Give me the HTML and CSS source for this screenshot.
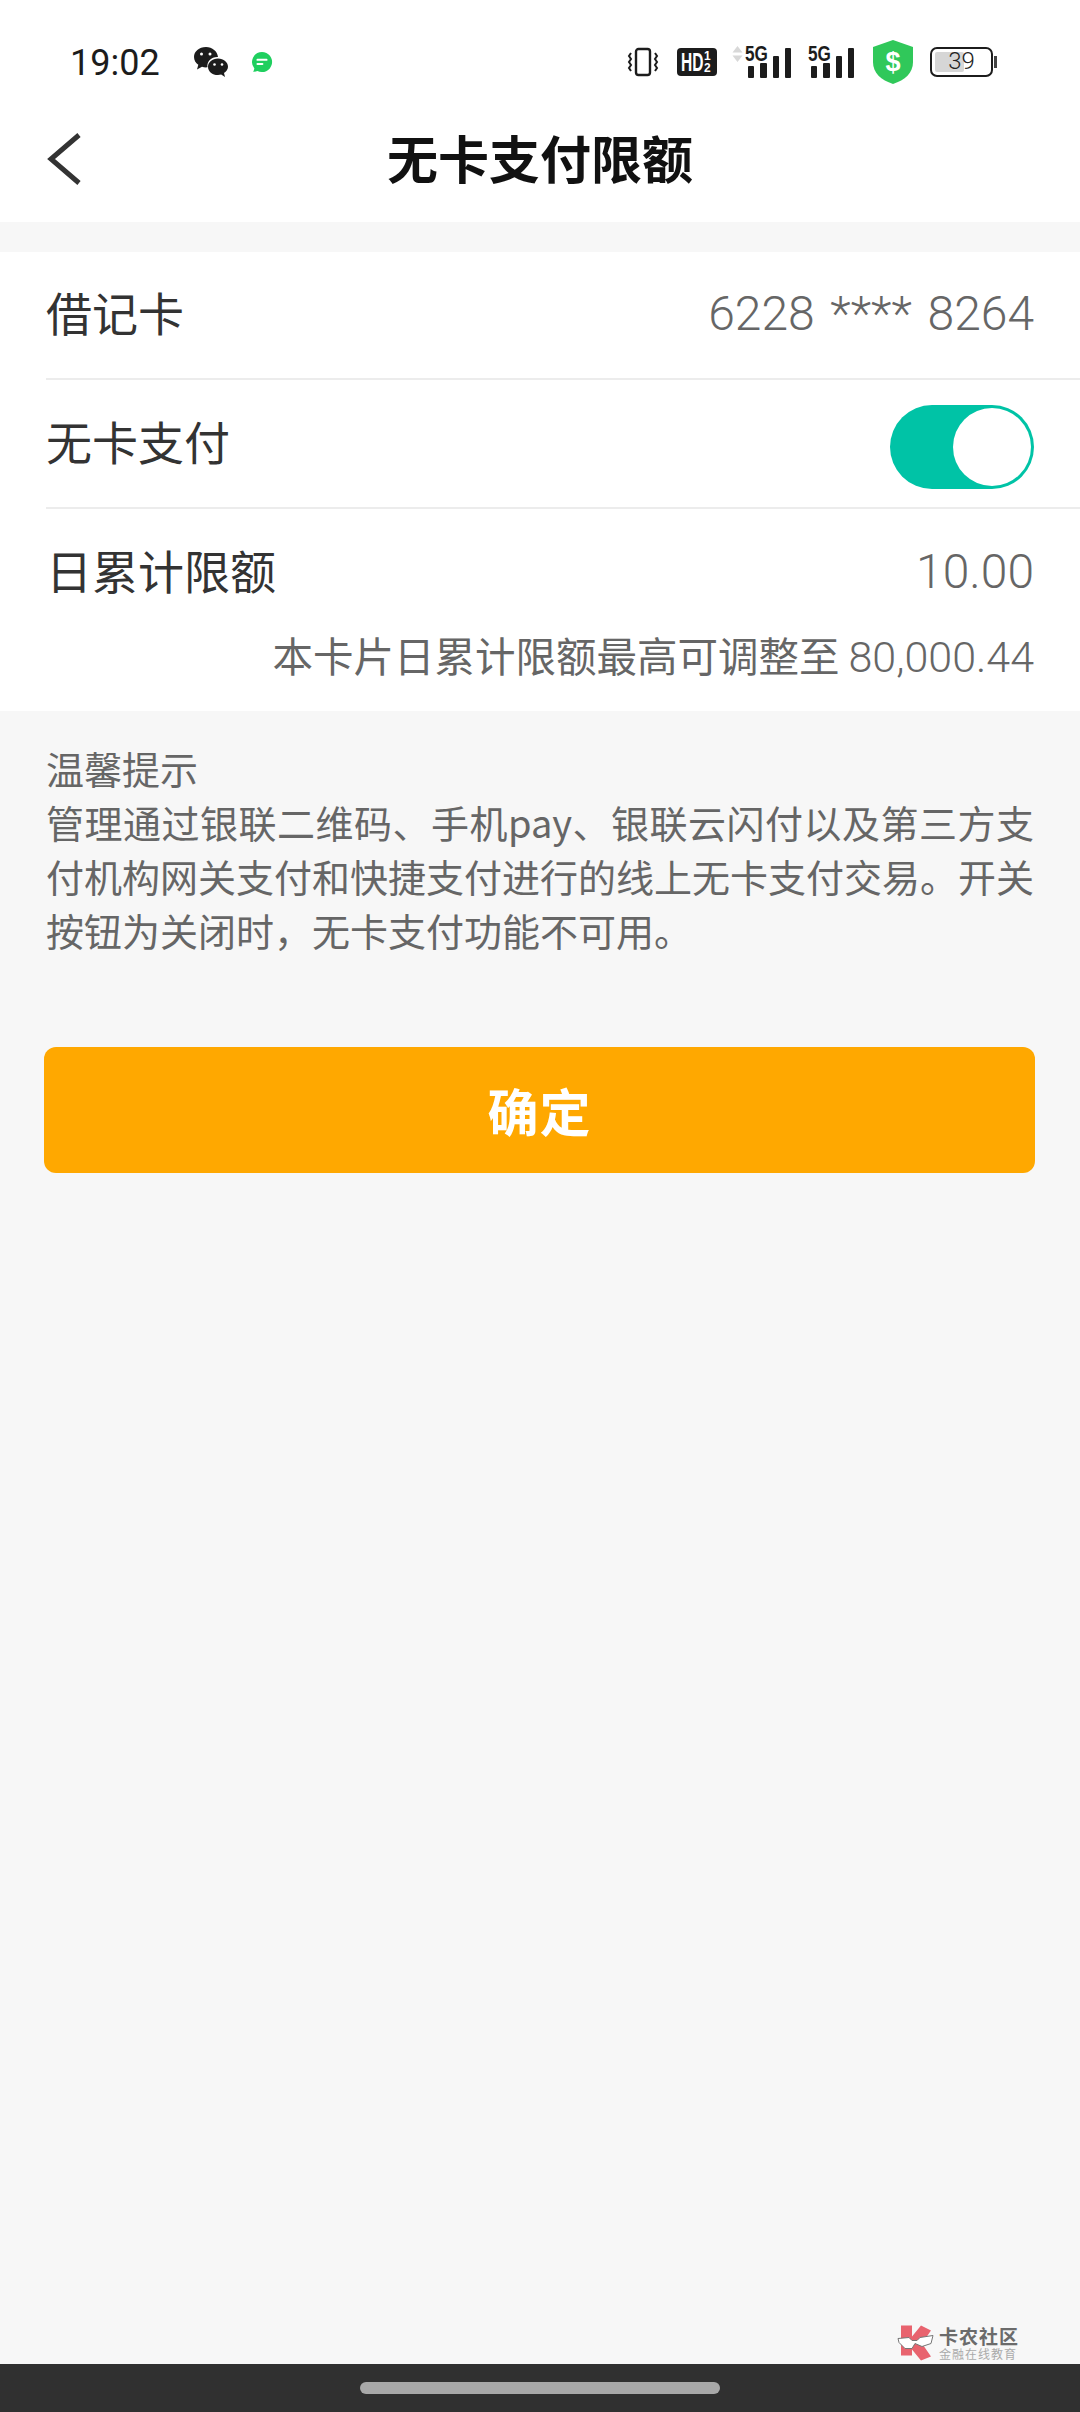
FILE: index.html
```html
<!DOCTYPE html>
<html lang="zh-CN">
<head>
    <meta charset="UTF-8">
    <meta name="viewport" content="width=device-width, initial-scale=1.0">
    <title>无卡支付限额</title>
    <link rel="stylesheet" href="styles.css">
</head>
<body>
    <div class="page">
        <div class="status-bar">
            <span class="clock">19:02</span>
            <svg class="icon-wechat" width="36" height="32" viewBox="0 0 36 32">
                <path d="M13 1C6 1 1 5.500 1 11c0 3.200 1.700 6 4.300 7.800L4 23.500l5-2.700c1.300.4 2.600.6 4 .6.500 0 1 0 1.500-.1C13.500 15 19 10.500 25 11 24.400 5.400 19.300 1 13 1z" fill="#1c1c1c"/>
                <path d="M25 12.500c-5.700 0-10 3.700-10 8.300s4.300 8.300 10 8.300c1.100 0 2.200-.2 3.200-.5l3.800 2.300-1-3.800c2.400-1.500 4-3.700 4-6.300 0-4.600-4.300-8.300-10-8.300z" fill="#1c1c1c"/>
                <circle cx="8.500" cy="8" r="1.500" fill="#fff"/>
                <circle cx="17" cy="8" r="1.500" fill="#fff"/>
                <circle cx="21.500" cy="18.500" r="1.300" fill="#fff"/>
                <circle cx="29" cy="18.500" r="1.300" fill="#fff"/>
            </svg>
            <svg class="icon-msg" width="22" height="22" viewBox="0 0 24 24">
                <path d="M12 1a11 11 0 1 1-5 20.800L2.500 23l1.200-4A11 11 0 0 1 12 1z" fill="#1fcf5f"/>
                <rect x="6" y="8.500" width="12" height="2.200" rx="1" fill="#fff"/>
                <rect x="6" y="13" width="7.500" height="2.200" rx="1" fill="#fff"/>
            </svg>
            <div class="status-right">
                <svg class="icon-vibrate" width="32" height="30" viewBox="0 0 32 30">
                    <rect x="9" y="2" width="14" height="26" rx="2.500" fill="none" stroke="#1c1c1c" stroke-width="2.400"/>
                    <path d="M4 6l-2 3 2 3-2 3 2 3-2 3 2 3M28 6l2 3-2 3 2 3-2 3 2 3-2 3" fill="none" stroke="#1c1c1c" stroke-width="2"/>
                </svg>
                <div class="hd-badge"><span class="hd-text">HD</span><span class="hd-frac">1<br>2</span></div>
                <div class="signal signal-first">
                    <svg class="signal-arrows" width="11" height="16" viewBox="0 0 11 16"><path d="M5.500 0l5 6.500H.5zM5.500 16l5-6.500H.5z" fill="#d8d8d8"/></svg>
                    <span class="signal-label">5G</span>
                    <div class="bars"><i class="bar-1"></i><i class="bar-2"></i><i class="bar-3"></i><i class="bar-4"></i></div>
                </div>
                <div class="signal">
                    <span class="signal-label">5G</span>
                    <div class="bars"><i class="bar-1"></i><i class="bar-2"></i><i class="bar-3"></i><i class="bar-4"></i></div>
                </div>
                <div class="shield">
                    <svg width="42" height="44" viewBox="0 0 42 44"><path d="M21 0l20 7v15c0 11-8 18-20 22C9 40 1 33 1 22V7z" fill="#30c85a"/></svg>
                    <span class="shield-mark">$</span>
                </div>
                <div class="battery">
                    <div class="battery-body"><span class="battery-fill"></span><span class="battery-num">39</span></div>
                    <span class="battery-tip"></span>
                </div>
            </div>
        </div>

        <div class="header">
            <svg class="back" width="36" height="52" viewBox="0 0 36 52"><path d="M33 2L5 26l28 24" fill="none" stroke="#333" stroke-width="5"/></svg>
            <h1>无卡支付限额</h1>
        </div>

        <div class="card">
            <div class="row row-line">
                <span class="row-label">借记卡</span>
                <span class="row-value">6228 **** 8264</span>
            </div>
            <div class="row row-line row-switch">
                <span class="row-label">无卡支付</span>
                <span class="switch"><span class="knob"></span></span>
            </div>
            <div class="row row-limit">
                <span class="row-label">日累计限额</span>
                <span class="row-value">10.00</span>
            </div>
            <div class="limit-note">本卡片日累计限额最高可调整至 <span class="num">80,000.44</span></div>
        </div>

        <div class="tips">
            <div>温馨提示</div>
            <div class="tips-body">管理通过银联二维码、手机pay、银联云闪付以及第三方支付机构网关支付和快捷支付进行的线上无卡支付交易。开关按钮为关闭时，无卡支付功能不可用。</div>
        </div>

        <button class="confirm">确定</button>

        <div class="spacer"></div>

        <div class="watermark">
            <svg width="38" height="37" viewBox="0 0 38 36">
                <path d="M4 1h11v11L24 1l10 5-9 13 9 13-10 4-9-11v6H4z" fill="#e8636e"/>
                <path d="M1 14l11-1 3 3 5 0 3-3 13-2-2 8-9 3-7-3-3 5-7 0-6-6z" fill="#fff" stroke="#777" stroke-width="1"/>
            </svg>
            <div class="watermark-text">
                <span class="wm-title">卡农社区</span>
                <span class="wm-sub">金融在线教育</span>
            </div>
        </div>

        <div class="nav-bar"><span class="nav-pill"></span></div>
    </div>
</body>
</html>
```

FILE: styles.css
```css
* {
    box-sizing: border-box;
}
body {
    margin: 0;
    padding: 0;
    font-family: "Noto Sans CJK SC", "Noto Sans", sans-serif;
    background-color: #f7f7f7;
}
.page {
    width: 1080px;
    height: 2412px;
    display: flex;
    flex-direction: column;
    position: relative;
    overflow: hidden;
}

/* status bar */
.status-bar {
    height: 100px;
    background-color: #ffffff;
    display: flex;
    align-items: center;
    padding: 24px 0 0 70px;
    flex-shrink: 0;
}
.clock {
    font-family: Roboto, sans-serif;
    font-size: 36px;
    color: #1c1c1c;
    width: 123px;
    margin-top: 2px;
}
.icon-wechat {
    margin-right: 22px;
}
.status-right {
    margin-left: auto;
    margin-right: 83px;
    display: flex;
    align-items: center;
    gap: 18px;
}
.hd-badge {
    width: 40px;
    height: 28px;
    background-color: #1c1c1c;
    color: #fff;
    border-radius: 4px;
    display: flex;
    align-items: center;
    padding-left: 4px;
    font-family: "Liberation Sans", sans-serif;
    font-weight: 700;
}
.hd-text {
    width: 23px;
    font-size: 25px;
    transform: scaleX(0.62);
    transform-origin: left;
}
.hd-frac {
    font-size: 12px;
    line-height: 12px;
    text-align: center;
}
.signal {
    position: relative;
    width: 46px;
    height: 32px;
    margin-left: -1px;
}
.signal-first {
    margin-left: 10px;
}
.signal-arrows {
    position: absolute;
    left: -13px;
    top: 0;
}
.signal-label {
    position: absolute;
    left: 0;
    top: -3px;
    z-index: 1;
    font-family: "Liberation Sans", sans-serif;
    font-weight: 700;
    font-size: 22px;
    line-height: 22px;
    color: #1c1c1c;
    transform: scaleX(0.78);
    transform-origin: left;
    -webkit-text-stroke: 2px #ffffff;
    paint-order: stroke fill;
}
.bars {
    position: absolute;
    left: 3px;
    right: 0;
    bottom: 0;
    height: 100%;
    display: flex;
    align-items: flex-end;
    gap: 6px;
}
.bars i {
    width: 6.500px;
    background-color: #1c1c1c;
    border-radius: 1px;
}
.bars .bar-1 { height: 12px; }
.bars .bar-2 { height: 15px; }
.bars .bar-3 { height: 22px; }
.bars .bar-4 { height: 30px; }
.shield {
    position: relative;
    width: 42px;
    height: 44px;
    display: flex;
    align-items: center;
    justify-content: center;
}
.shield svg {
    position: absolute;
    left: 0;
    top: 0;
}
.shield-mark {
    position: relative;
    color: #fff;
    font-family: "Liberation Sans", sans-serif;
    font-weight: 700;
    font-size: 27px;
}
.battery {
    display: flex;
    align-items: center;
    margin-left: -2px;
}
.battery-body {
    position: relative;
    width: 63px;
    height: 30px;
    border: 2.500px solid #1c1c1c;
    border-radius: 7px;
    padding: 3px;
}
.battery-fill {
    display: block;
    width: 55%;
    height: 100%;
    background-color: #d6d6d6;
    border-radius: 2px;
}
.battery-num {
    position: absolute;
    left: 0;
    right: 0;
    top: 0;
    bottom: 0;
    text-align: center;
    font-family: Roboto, sans-serif;
    font-weight: 300;
    font-size: 24px;
    line-height: 25px;
    color: #222;
}
.battery-tip {
    width: 3px;
    height: 12px;
    margin-left: 1px;
    background-color: #444;
}

/* header */
.header {
    height: 122px;
    background-color: #ffffff;
    display: flex;
    align-items: center;
    justify-content: center;
    position: relative;
    flex-shrink: 0;
}
.back {
    position: absolute;
    left: 46px;
    top: 33px;
}
h1 {
    margin: 0;
    font-size: 51px;
    font-weight: 700;
    color: #111;
    line-height: 1;
    position: relative;
    top: -4px;
}

/* list */
.card {
    margin-top: 30px;
    background-color: #ffffff;
    padding-left: 46px;
}
.row {
    display: flex;
    align-items: center;
    justify-content: space-between;
    padding-right: 46px;
    padding-bottom: 8px;
}
.row-line {
    height: 128px;
    border-bottom: 2px solid #ececec;
}
.row-switch {
    height: 129px;
}
.row-limit {
    height: 127px;
}
.row-label {
    font-size: 46px;
    color: #333;
}
.row-value {
    font-family: Roboto, sans-serif;
    font-weight: 300;
    font-size: 48px;
    word-spacing: 4px;
    color: #666;
    margin-top: 5px;
}
.switch {
    width: 144px;
    height: 84px;
    margin-top: 14px;
    border-radius: 42px;
    background-color: #00c3a6;
    display: flex;
    align-items: center;
    justify-content: flex-end;
    padding-right: 3px;
}
.knob {
    width: 78px;
    height: 78px;
    border-radius: 50%;
    background-color: #ffffff;
}
.limit-note {
    height: 75px;
    padding-right: 46px;
    text-align: right;
    font-size: 40.500px;
    line-height: 38px;
    color: #666;
    white-space: nowrap;
}
.num {
    font-family: Roboto, sans-serif;
    font-weight: 300;
    font-size: 43px;
}

/* tips */
.tips {
    padding: 30px 46px 0 46px;
    font-size: 38px;
    line-height: 54px;
    color: #666;
}
.tips-body {
    text-align: justify;
}

/* button */
.confirm {
    display: block;
    width: 991px;
    height: 126px;
    margin: 90px 0 0 44px;
    border: none;
    border-radius: 12px;
    background-color: #ffa800;
    color: #fff;
    font-family: "Noto Sans CJK SC", sans-serif;
    font-size: 51px;
    font-weight: 700;
    letter-spacing: 1px;
}
.spacer {
    flex: 1;
}

/* watermark */
.watermark {
    position: absolute;
    left: 897px;
    bottom: 51px;
    display: flex;
    align-items: center;
    gap: 4px;
}
.watermark-text {
    display: flex;
    flex-direction: column;
}
.wm-title {
    font-size: 19px;
    line-height: 21px;
    font-weight: 700;
    color: #6b6b6b;
    letter-spacing: 1px;
}
.wm-sub {
    font-size: 12px;
    line-height: 15px;
    color: #aaa;
    letter-spacing: 1px;
}

/* nav bar */
.nav-bar {
    height: 48px;
    background-color: #303030;
    display: flex;
    align-items: center;
    justify-content: center;
    flex-shrink: 0;
}
.nav-pill {
    width: 360px;
    height: 12px;
    border-radius: 6px;
    background-color: #a8a8a8;
}
```
